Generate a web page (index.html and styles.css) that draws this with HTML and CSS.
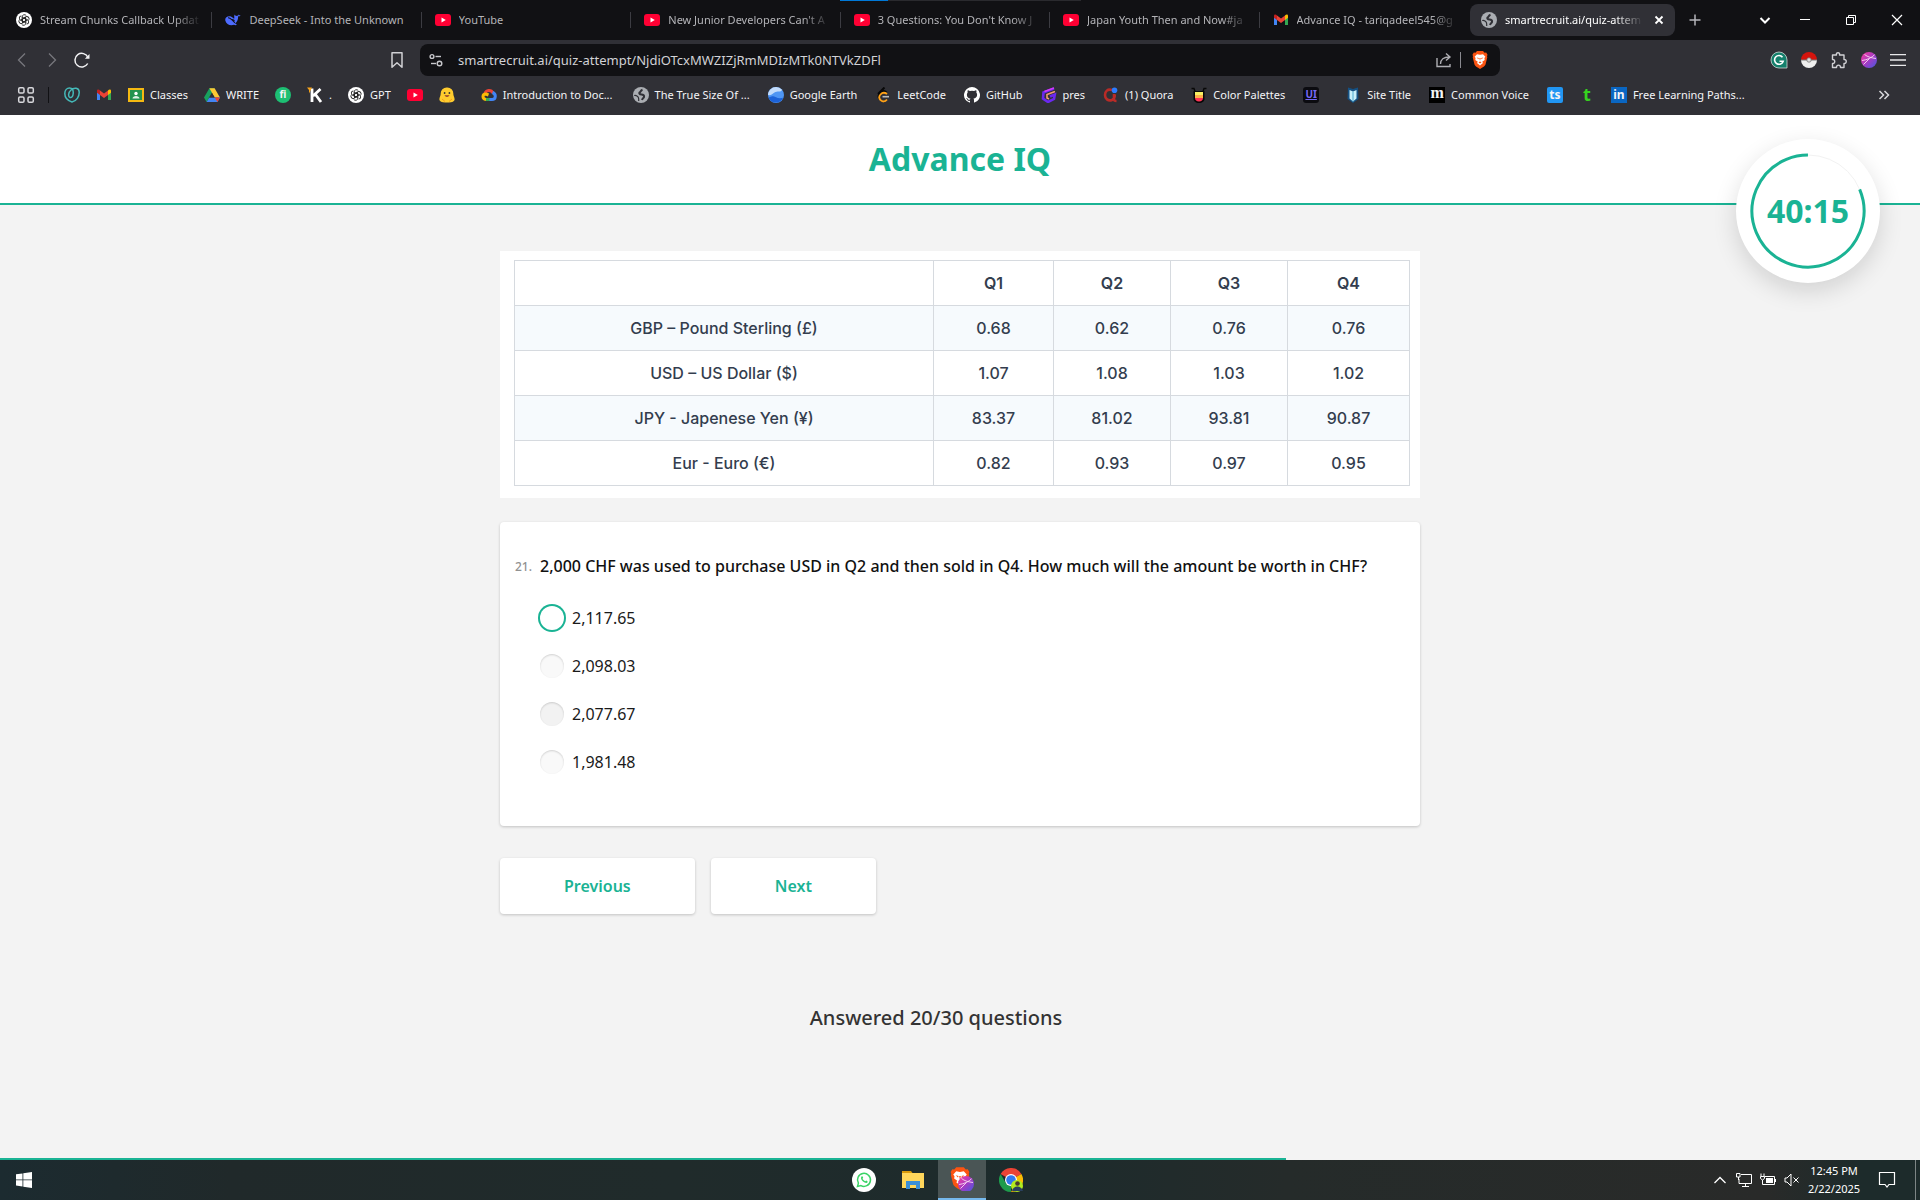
FILE: index.html
```html
<!DOCTYPE html>
<html lang="en">
<head>
<meta charset="utf-8">
<title>Advance IQ</title>
<link rel="stylesheet" href="styles.css">
</head>
<body>
<svg class="defs" aria-hidden="true">
  <symbol id="gpt" viewBox="0 0 16 16"><circle cx="8" cy="8" r="8" fill="#fff"/><g fill="none" stroke="#222" stroke-width=".9"><path id="petal" d="M6.1 8.9V5a2.3 2.3 0 0 1 4.2-1.3M6.1 5.2L9.7 7.200"/><use href="#petal" transform="rotate(60 8 8)"/><use href="#petal" transform="rotate(120 8 8)"/><use href="#petal" transform="rotate(180 8 8)"/><use href="#petal" transform="rotate(240 8 8)"/><use href="#petal" transform="rotate(300 8 8)"/></g></symbol>
  <symbol id="yt" viewBox="0 0 16 16"><rect y="2" width="16" height="12" rx="3" fill="#ff0033"/><path d="M6.500 5.500v5L10.800 8z" fill="#fff"/></symbol>
  <symbol id="gmail" viewBox="0 0 16 16"><path d="M1 4v9h3V6z" fill="#4285f4"/><path d="M12 6v7h3V4z" fill="#34a853"/><path d="M12 3.500V8l3-2.200V4c0-1.600-1.700-2-3-.5z" fill="#fbbc04"/><path d="M4 3.500V8L1 5.800V4c0-1.600 1.700-2 3-.5z" fill="#c5221f"/><path d="M4 8V3.500l4 3 4-3V8l-4 3z" fill="#ea4335"/></symbol>
  <symbol id="globe" viewBox="0 0 16 16"><circle cx="8" cy="8" r="8" fill="#aaadb2"/><path d="M9.500 2.800C7.500 3.500 8 4.500 7 5.200 5.500 6 6.500 7.500 8.500 7.500s3 1 2.500 2.500c-.5 1.200-1.500 1.200-2 3" fill="none" stroke="#303036" stroke-width="2"/><path d="M1.200 8.500c2-.5 4 .8 4.300 2.300.2 1.200.3 1.500.2 3.200" fill="none" stroke="#303036" stroke-width="1.200"/></symbol>
  <symbol id="lion" viewBox="0 0 16 18"><path d="M5 0h6l1.600 1.700 1.600-.2 1.300 2.200-.5 1.500.3 1.100-1.800 7.200c-.3 1.300-2.800 2.900-5.500 4.500-2.700-1.600-5.200-3.200-5.500-4.500L.7 6.300 1 5.200.5 3.700l1.300-2.200 1.600.2z" fill="#fb5412"/><path d="M5 3.200l3 .5 3-.5 2.400 2.500-1 1.400.3 1.800-2.500 1.800L11 12l-3 2.600L5 12l.8-1.300-2.500-1.800.3-1.800-1-1.400z" fill="#fff"/><path d="M4.600 6.400l2.200.5-.4 1.300zM11.400 6.400l-2.200.5.4 1.300zM6.500 11.300L8 10.500l1.500.8L8 12.400zM7.300 7h1.400L8 9.800z" fill="#fb5412"/></symbol>
  <linearGradient id="orb" x1="0" y1="0" x2="1" y2="1"><stop offset="0" stop-color="#ff3d9a"/><stop offset=".5" stop-color="#a63bc4"/><stop offset="1" stop-color="#4459e0"/></linearGradient>
  <symbol id="profile" viewBox="0 0 16 16"><circle cx="8" cy="8" r="8" fill="url(#orb)"/><path d="M1 8.500C6 8 11 5.500 13.500 2.800M3.500 2.500c3 2.500 7.500 3.500 11.500 4M8.500 6.500L2.500 12.500" fill="none" stroke="#fbd9f2" stroke-width=".9"/></symbol>
  <symbol id="winclose" viewBox="0 0 16 16"><path d="M3 3l10 10M13 3L3 13" stroke="#fff" stroke-width="1.200"/></symbol>
</svg>

<div class="browser">
  <div class="tabstrip">
    <nav class="tabs" aria-label="Open tabs">
      <a class="tab" href="#"><svg class="i16"><use href="#gpt"/></svg><span>Stream Chunks Callback Updat</span></a>
      <a class="tab" href="#"><svg class="i16" viewBox="0 0 16 16"><path d="M15.700 3.500c-1 1-2 .9-2.600.8.2 3-1 5.600-3 7.200l1.900 1.300c-1 .7-2.200.4-3 0-3.700 1.400-7.900-.5-8.700-4.400C-.2 5.700 2 3.900 5 4.200c1.300.2 2.300 1 3.300 2 .8.700 1.300.2 1-.8C9 4 9.400 3 9.700 2.500c.5 1.600 1.700 1.500 2.800 1.200.8-.2 1.200-.8 1.200-1.200.4.600 1.200 1 2 1z" fill="#4d6bfe"/><path d="M3 5.700c3 0 4.600 2.800 6.800 5.200M6.500 8.200c.9-.9 2.300-.6 3 .5" fill="none" stroke="#111114" stroke-width="1.100"/></svg><span class="full">DeepSeek - Into the Unknown</span></a>
      <a class="tab" href="#"><svg class="i16"><use href="#yt"/></svg><span class="full">YouTube</span></a>
      <a class="tab" href="#"><svg class="i16"><use href="#yt"/></svg><span>New Junior Developers Can't A</span></a>
      <a class="tab" href="#"><svg class="i16"><use href="#yt"/></svg><span>3 Questions: You Don't Know J</span></a>
      <a class="tab" href="#"><svg class="i16"><use href="#yt"/></svg><span>Japan Youth Then and Now#ja</span></a>
      <a class="tab last" href="#"><svg class="i16"><use href="#gmail"/></svg><span>Advance IQ - tariqadeel545@g</span></a>
      <div class="tab active"><svg class="i16"><use href="#globe"/></svg><span>smartrecruit.ai/quiz-attem</span><button class="icon-btn close" aria-label="Close tab"><svg class="i16" viewBox="0 0 16 16"><path d="M4.500 4.500l7 7M11.500 4.500l-7 7" stroke="#fff" stroke-width="1.800"/></svg></button></div>
    </nav>
    <button class="icon-btn plus" aria-label="New tab"><svg class="i16" viewBox="0 0 16 16"><path d="M8 2.500v11M2.500 8h11" stroke="#b5b5ba" stroke-width="1.500"/></svg></button>
    <div class="window-buttons">
      <button class="icon-btn search-tabs" aria-label="Search tabs"><svg class="i16" viewBox="0 0 16 16"><path d="M3.500 6L8 10.500 12.500 6" fill="none" stroke="#fff" stroke-width="2"/></svg></button>
      <button class="icon-btn" aria-label="Minimize"><svg class="i16" viewBox="0 0 16 16"><path d="M3 7.500h10" stroke="#fff"/></svg></button>
      <button class="icon-btn" aria-label="Restore"><svg class="i16" viewBox="0 0 16 16"><path d="M3.500 5.500h7v7h-7zM5.500 5.500v-2h7v7h-2" fill="none" stroke="#fff"/></svg></button>
      <button class="icon-btn" aria-label="Close"><svg class="i16"><use href="#winclose"/></svg></button>
    </div>
    <i class="load-line"></i>
  </div>

  <div class="toolbar">
    <div class="nav-buttons">
      <button class="icon-btn" aria-label="Back"><svg class="i18" viewBox="0 0 18 18"><path d="M12 2.500L5.500 9l6.500 6.500" fill="none" stroke="#77777d" stroke-width="1.300"/></svg></button>
      <button class="icon-btn" aria-label="Forward"><svg class="i18" viewBox="0 0 18 18"><path d="M6 2.500L12.500 9 6 15.500" fill="none" stroke="#77777d" stroke-width="1.300"/></svg></button>
      <button class="icon-btn" aria-label="Reload"><svg class="i18" viewBox="0 0 18 18"><path d="M15 6.500A6.800 6.800 0 1 0 14.700 12.500" fill="none" stroke="#f2f2f4" stroke-width="1.500"/><path d="M16.500 3v4.800h-4.600z" fill="#f2f2f4"/></svg></button>
    </div>
    <button class="icon-btn save" aria-label="Bookmark"><svg class="i18" viewBox="0 0 18 18"><path d="M4 1.800h10v14.400l-5-4.400-5 4.400z" fill="none" stroke="#d0d0d4" stroke-width="1.500" stroke-linejoin="round"/></svg></button>
    <div class="address">
      <svg class="i16" viewBox="0 0 16 16"><g fill="none" stroke="#c8c8cc" stroke-width="1.400"><circle cx="4" cy="4.500" r="1.900"/><path d="M7.500 4.500H13"/><circle cx="11.500" cy="11.500" r="2.300"/><path d="M3 11.500h5"/></g></svg>
      <input type="text" aria-label="Address" value="smartrecruit.ai/quiz-attempt/NjdiOTcxMWZIZjRmMDIzMTk0NTVkZDFl">
      <button class="icon-btn" aria-label="Share"><svg class="i16" viewBox="0 0 16 16"><path d="M1 6v8.500h13V12M4.500 12C4.500 7.500 8 5 13 5M10 1.500L14 5l-4 3.500" fill="none" stroke="#aeaeb3" stroke-width="1.400"/></svg></button>
      <i class="divider"></i>
      <button class="icon-btn" aria-label="Shields"><svg class="lion"><use href="#lion"/></svg></button>
    </div>
    <div class="extensions">
      <button class="icon-btn" aria-label="Grammar"><svg class="i18" viewBox="0 0 18 18"><path d="M9 1a8 8 0 0 1 8 8v8H9A8 8 0 0 1 9 1z" fill="#15806c" stroke="#cfd8d6" stroke-width=".8"/><path d="M12.500 6.200a4.400 4.400 0 1 0 .7 4H9.500" fill="none" stroke="#fff" stroke-width="1.600"/></svg></button>
      <button class="icon-btn" aria-label="Poke Ball"><svg class="i16" viewBox="0 0 16 16"><path d="M0 8a8 8 0 0 1 16 0z" fill="#d4140d"/><path d="M0 8a8 8 0 0 0 16 0z" fill="#eee"/><path d="M0 7.500h16v1H0z" fill="#777"/><circle cx="8" cy="8" r="2.200" fill="#ddd" stroke="#777" stroke-width=".8"/></svg></button>
      <button class="icon-btn" aria-label="Extensions"><svg class="i18" viewBox="0 0 18 18"><path d="M2.500 4H6.500C5.500 1 10.500 1 9.500 4H14v4.500c3-.5 3 4.300 0 4V16.500H10.500c.3-3.200-4.300-3.200-4 0h-4V12.500c3 .5 3-4.500 0-4z" fill="none" stroke="#d0d0d4" stroke-width="1.400" stroke-linejoin="round"/></svg></button>
      <button class="icon-btn" aria-label="Profile"><svg class="i16"><use href="#profile"/></svg></button>
      <button class="icon-btn" aria-label="Menu"><svg class="i16" viewBox="0 0 16 16"><path d="M0 2.700h16M0 8h16M0 13.300h16" stroke="#e8e8ea" stroke-width="1.300"/></svg></button>
    </div>
  </div>

  <nav class="bookmarks" aria-label="Bookmarks">
    <button class="icon-btn" aria-label="All bookmarks"><svg class="i18" viewBox="0 0 18 18"><g fill="none" stroke="#d8d8dc" stroke-width="1.500"><rect x="1.700" y="1.700" width="5.300" height="5.300" rx="1.300"/><rect x="11" y="1.700" width="5.300" height="5.300" rx="1.300"/><rect x="1.700" y="11" width="5.300" height="5.300" rx="1.300"/><rect x="11" y="11" width="5.300" height="5.300" rx="1.300"/></g></svg></button>
    <i class="divider dark"></i>
    <a href="#" aria-label="Mentor"><svg class="i16" viewBox="0 0 16 16"><path d="M8 15C3 13.500.8 10 .8 6.500.8 3 3 1 5.500 1c3 0 4 2.500 3.700 5.500C9 9.500 7.500 11 6 10.500 4 10 4 5.500 7 3c3-2.600 8-2.500 8.200 2C15.400 9.500 12.500 14 8 15z" fill="none" stroke="#45b9b8" stroke-width="1.500"/></svg></a>
    <a href="#" aria-label="Gmail"><svg class="i16"><use href="#gmail"/></svg></a>
    <a href="#"><svg class="i16" viewBox="0 0 16 16"><path d="M0 1h16v14H0z" fill="#f5b912"/><path d="M2 3h12v10H2z" fill="#23934e"/><circle cx="8" cy="6.500" r="1.700" fill="#fff"/><path d="M4.500 11.500c0-3.500 7-3.500 7 0z" fill="#dff1e5"/></svg>Classes</a>
    <a href="#"><svg class="i16" viewBox="0 0 16 16"><path d="M5.400 1.300h5.200L5.300 10.300 2.600 15 0 10.500z" fill="#18a05e"/><path d="M5.400 1.300h5.200l5.400 9.200h-5.300z" fill="#fcc934"/><path d="M5.300 10.500H16L13.400 15H2.600z" fill="#4285f4"/><path d="M10.700 10.500H16L13.400 15z" fill="#ea4335"/><path d="M8 6l2.600 4.500H5.300z" fill="#303036"/></svg>WRITE</a>
    <a href="#" class="badge fiverr"><b>fi</b></a>
    <a href="#" class="kwork"><svg class="i16" viewBox="0 0 16 16"><path d="M5 1.500V15M13.500 2L6 9M8.500 7.500L14 15" stroke="#fff" stroke-width="2.800" fill="none"/><path d="M0 .5h5L2 6.500V3z" fill="#f7a31b"/></svg>.</a>
    <a href="#"><svg class="i16"><use href="#gpt"/></svg>GPT</a>
    <a href="#" aria-label="YouTube"><svg class="i16"><use href="#yt"/></svg></a>
    <a href="#" class="wide" aria-label="Hugging Face"><svg class="i16" viewBox="0 0 16 16"><path d="M8 .5a6 6 0 0 1 6.300 6.500c.2 2.500 2 4.500 1 6.500-1.300 2-4.800 2-7.300 2s-6 0-7.300-2c-1-2 .8-4 1-6.500A6 6 0 0 1 8 .5z" fill="#ffcc2e"/><circle cx="5.600" cy="6" r=".9" fill="#333"/><circle cx="10.400" cy="6" r=".9" fill="#333"/><path d="M5.500 8.300c1.200 2.200 3.800 2.200 5 0z" fill="#923d2b"/><path d="M3 12l3 2.500M13 12l-3 2.500" stroke="#f39b1d"/></svg></a>
    <a href="#" class="clipped"><svg class="i16" viewBox="0 0 16 16"><g fill="none" stroke-width="3"><path d="M4 6.500C5 3 10 2 12 6" stroke="#ea4335"/><path d="M11.500 5.500c4 1.500 3.500 7-.5 7H8" stroke="#4285f4"/><path d="M8.500 12.500H4.500" stroke="#34a853"/><path d="M5 12.500c-4-.5-4-5.500 0-5.500l2.500 1" stroke="#fbbc04"/></g></svg>Introduction to Doc...</a>
    <a href="#"><svg class="i16"><use href="#globe"/></svg>The True Size Of ...</a>
    <a href="#"><svg class="i16" viewBox="0 0 16 16"><circle cx="8" cy="8" r="8" fill="#4f96f4"/><path d="M2.300 2.500A8 8 0 0 1 14 2.800C13 6 9 3.500 6.500 5.500S2.500 8.500 0 8c0-2 .8-4 2.300-5.500z" fill="#c3dcfb"/><path d="M.5 10.500c3-1 4.500-2 7-.5s5 1.500 7.700.8A8 8 0 0 1 .5 10.500z" fill="#1c62d8"/></svg>Google Earth</a>
    <a href="#"><svg class="i16" viewBox="0 0 16 16"><path d="M9.500.5L3 7" stroke="#080808" stroke-width="2" fill="none"/><path d="M11.500 5.500c-2-2-4-1.500-5.500 0-2.500 2.500-3.500 4-1.500 6" stroke="#080808" stroke-width="2" fill="none"/><path d="M12 12.500c-2 2.700-5 2.400-6.500.5-2-2-1.800-3.500 0-5.500s4-2.400 6.500-.5" stroke="#ffa116" stroke-width="1.800" fill="none"/><path d="M7.500 9.700H14" stroke="#bbb" stroke-width="1.600"/></svg>LeetCode</a>
    <a href="#"><svg class="i16" viewBox="0 0 16 16"><path d="M8 0a8 8 0 0 0-2.500 15.600c.4.100.5-.2.500-.4v-1.400c-2.200.5-2.700-1-2.700-1-.4-.9-.9-1.200-.9-1.200-.7-.5.100-.5.100-.5.800.1 1.200.8 1.200.8.700 1.200 1.900.9 2.300.7.100-.5.300-.9.500-1.100-1.800-.2-3.600-.9-3.600-4 0-.9.300-1.600.8-2.100-.1-.2-.4-1 .1-2.100 0 0 .7-.2 2.200.8a7.600 7.600 0 0 1 4 0c1.500-1 2.200-.8 2.200-.8.500 1.100.2 1.900.1 2.100.5.600.8 1.300.8 2.100 0 3.100-1.900 3.800-3.700 4 .3.300.6.800.6 1.500v2.200c0 .2.100.5.500.4A8 8 0 0 0 8 0z" fill="#fff"/></svg>GitHub</a>
    <a href="#"><svg class="i16" viewBox="0 0 16 16"><path d="M13 1.500L2.500 5.500 2 11.500l5 3.500 6-3 .8-4.500L9 9.500" fill="none" stroke="#6a28f0" stroke-width="2.600"/><path d="M14 4.500L6 7.500v3.500l2 1" fill="none" stroke="#f49a75" stroke-width="1.600"/><path d="M3.500 4.500L13 1" stroke="#d63af5" stroke-width="1.400"/></svg>pres</a>
    <a href="#"><svg class="i16" viewBox="0 0 16 16"><path d="M9 3C4.500 1.500 2 4.500 2 8s3 6.500 7 5c2.200-1 2.800-3 2.800-5.500M11 7v5.500c0 1 1 1.500 2.500 1.500" fill="none" stroke="#b92b27" stroke-width="2.600"/><circle cx="11.500" cy="3.200" r="2.800" fill="#2b7cff"/></svg>(1) Quora</a>
    <a href="#"><svg class="i16" viewBox="0 0 16 16"><path d="M.5 1.500h2.500l1 3M15.500 1.500H13l-1 3" fill="none" stroke="#080808" stroke-width="1.400"/><path d="M2.500 4h11v8c0 2-2 4-5.500 4s-5.500-2-5.500-4z" fill="#080808"/><path d="M4 5h8v3H4z" fill="#f8f062"/><path d="M4 8h8v3H4z" fill="#ffb04a"/><path d="M4 11h8c0 2-1.500 3.500-4 3.500S4 13 4 11z" fill="#f35"/></svg>Color Palettes</a>
    <a href="#" class="badge ui"><b>UI</b></a>
    <a href="#"><svg class="i16" viewBox="0 0 16 16"><path d="M8 2L3 .5 2.500 12 8 16l5.500-4L13 .5z" fill="#155082"/><path d="M4.500 3L8 4.500 11.500 3v8.500L8 14.500l-3.500-3z" fill="#c9eff9"/><path d="M8 4.500v10" stroke="#4eaccf"/></svg>Site Title</a>
    <a href="#"><b class="mark moz">m</b>Common Voice</a>
    <a href="#" class="badge ts"><b>ts</b></a>
    <a href="#" class="badge tee"><b>t</b></a>
    <a href="#"><b class="mark linked">in</b>Free Learning Paths...</a>
    <button class="icon-btn more" aria-label="More bookmarks"><svg class="i16" viewBox="0 0 16 16"><path d="M3.500 4L7.500 8l-4 4M8.500 4l4 4-4 4" fill="none" stroke="#d8d8dc" stroke-width="1.500"/></svg></button>
  </nav>
</div>

<div class="page">
  <header class="page-header">
    <h1>Advance IQ</h1>
    <div class="timer">
      <svg viewBox="0 0 144 144"><circle cx="72" cy="72" r="56" fill="none" stroke="#f2f2f2" stroke-width="1"/><circle cx="72" cy="72" r="56" fill="none" stroke="#1ab394" stroke-width="3" pathLength="1000" stroke-dasharray="813 187" transform="rotate(-22.700 72 72)"/></svg>
      <span>40:15</span>
    </div>
  </header>

  <main class="quiz">
    <section class="rates-card">
      <table class="rates">
        <colgroup><col class="c-name"><col class="c1"><col class="c2"><col class="c3"><col class="c4"></colgroup>
        <thead><tr><td></td><th>Q1</th><th>Q2</th><th>Q3</th><th>Q4</th></tr></thead>
        <tbody>
          <tr><td>GBP – Pound Sterling (£)</td><td>0.68</td><td>0.62</td><td>0.76</td><td>0.76</td></tr>
          <tr><td>USD – US Dollar ($)</td><td>1.07</td><td>1.08</td><td>1.03</td><td>1.02</td></tr>
          <tr><td>JPY - Japenese Yen (¥)</td><td>83.37</td><td>81.02</td><td>93.81</td><td>90.87</td></tr>
          <tr><td>Eur - Euro (€)</td><td>0.82</td><td>0.93</td><td>0.97</td><td>0.95</td></tr>
        </tbody>
      </table>
    </section>

    <form class="question">
      <span class="number">21.</span>
      <h2>2,000 CHF was used to purchase USD in Q2 and then sold in Q4. How much will the amount be worth in CHF?</h2>
      <div class="options">
        <label><input type="radio" name="answer" checked>2,117.65</label>
        <label><input type="radio" name="answer">2,098.03</label>
        <label class="hovered"><input type="radio" name="answer">2,077.67</label>
        <label><input type="radio" name="answer">1,981.48</label>
      </div>
    </form>

    <div class="actions">
      <button>Previous</button>
      <button>Next</button>
    </div>

    <p class="answered">Answered 20/30 questions</p>
  </main>

  <div class="progress"><div class="progress-fill" style="width: 67%"></div></div>
</div>

<footer class="taskbar">
  <button class="start" aria-label="Start"><svg class="i16" viewBox="0 0 16 16"><path d="M0 2.300L6.500 1.400V7.500H0zM7.300 1.300L16 0v7.500H7.300zM0 8.300h6.500v6.200L0 13.600zM7.300 8.300H16V16l-8.700-1.200z" fill="#fff"/></svg></button>
  <div class="apps">
    <button aria-label="WhatsApp"><svg class="i24" viewBox="0 0 24 24"><circle cx="12" cy="12" r="12" fill="#fff"/><path d="M5.500 18.500l.9-3.300a6.500 6.500 0 1 1 2.500 2.400z" fill="none" stroke="#3bd366" stroke-width="1.500"/><path d="M9.500 8.500c-1.200 1.500-.2 3.500 1.500 5s3.800 2 4.600.8c.5-1-.7-1.500-1.500-1.800-.7.900-1 .8-2 .1s-1.500-1.400-1.600-2c.8-.7.800-.9.300-1.900-.3-.6-.8-.8-1.300-.2z" fill="#3bd366"/></svg></button>
    <button aria-label="File Explorer"><svg class="i24" viewBox="0 0 24 24"><path d="M1 3h9l1.500 2H1z" fill="#d99a0b"/><path d="M1 5h22v15H1z" fill="#ffd65b"/><path d="M5 13h14v8h-4v-4H9v4H5z" fill="#3a8fd8"/></svg></button>
    <button class="current" aria-label="Brave"><svg class="i24" viewBox="0 0 24 24"><use href="#lion" width="20" height="23"/><use href="#profile" x="8" y="9" width="16" height="16"/></svg></button>
    <button aria-label="Chrome"><svg class="i24" viewBox="0 0 24 24"><path d="M12 12L1.600 6a12 12 0 0 1 20.800 0z" fill="#ea4335"/><path d="M12 12h0L22.400 6A12 12 0 0 1 12 24l5.200-9z" fill="#fbbc04"/><path d="M1.600 6l5.200 9L12 17v7A12 12 0 0 1 1.600 6z" fill="#1e9b4c"/><circle cx="12" cy="12" r="6" fill="#fff"/><circle cx="12" cy="12" r="4.800" fill="#3179ee"/><circle cx="18" cy="18" r="6" fill="#b2ec1e"/><circle cx="18.500" cy="15.500" r="2.300" fill="#493a2d"/><path d="M13 23c1-6 9.500-6 11 0z" fill="#29405f"/></svg></button>
  </div>
  <div class="tray">
    <svg class="i16" viewBox="0 0 16 16"><path d="M2.500 11L8 5.500l5.500 5.500" fill="none" stroke="#fff" stroke-width="1.300"/></svg>
    <svg class="i16" viewBox="0 0 16 16"><path d="M5 2.500h10.500v9H3V7M.5 1.500H4V5H.5zM2.500 5v3M9.500 11.500v3M6 14.500h7" fill="none" stroke="#fff"/></svg>
    <svg class="i16" viewBox="0 0 16 16"><path d="M4.500 4.500h10v8H4M15.500 7v3M1 1.500V4M4 1.500V4M.5 4.500h4v2l-2 1.500-2-1.500zM2.500 8v4.500H5" fill="none" stroke="#fff"/><path d="M6 6h7v5H6z" fill="#fff"/></svg>
    <svg class="i16" viewBox="0 0 16 16"><path d="M1 6h2l4-4v12l-4-4H1zM9.500 5.500l5 5M14.500 5.500l-5 5" fill="none" stroke="#fff"/></svg>
    <div class="clock"><span>12:45 PM</span><span>2/22/2025</span></div>
    <svg class="i18" viewBox="0 0 18 18"><path d="M1.500 1.500h15v12H11l-2 2.500-2-2.500H1.500z" fill="none" stroke="#fff" stroke-width="1.200"/></svg>
    <i class="peek"></i>
  </div>
</footer>
</body>
</html>
```

FILE: styles.css
```css
* { box-sizing: border-box; }

body {
  margin: 0;
  min-height: 100vh;
  display: flex;
  flex-direction: column;
  background: #f3f3f3;
  font-family: "Noto Sans", "Open Sans", sans-serif;
  font-size: 16px;
}

button, input { font: inherit; }

svg { flex: none; display: block; }

.defs { position: absolute; width: 0; height: 0; }
.i16 { width: 16px; height: 16px; }
.i18 { width: 18px; height: 18px; }
.i24 { width: 24px; height: 24px; }

.icon-btn {
  display: flex;
  padding: 0;
  border: 0;
  background: none;
}

/* Browser chrome */

.browser {
  background: #303036;
  color: #f4f4f6;
  font-size: 11px;
  line-height: 16px;
}

.tabstrip {
  position: relative;
  display: flex;
  align-items: center;
  height: 40px;
  padding-left: 3px;
  background: #111114;
}

.load-line {
  position: absolute;
  top: 0;
  left: 840px;
  width: 241px;
  height: 1px;
  background: linear-gradient(90deg, #0078d7 20%, #2a2a2e 20%);
}

.tabs { display: flex; flex: 0 1 1673px; min-width: 0; }

.tab {
  position: relative;
  flex: 1 1 0;
  min-width: 0;
  display: flex;
  align-items: center;
  gap: 8px;
  height: 32px;
  padding: 0 10px 0 13px;
  color: #b4b4b8;
  text-decoration: none;
}

.tab::after {
  content: "";
  position: absolute;
  right: 0;
  top: 8px;
  width: 1px;
  height: 16px;
  background: #3c3c42;
}

.tab.last::after, .tab.active::after { display: none; }

.tab span {
  flex: 1;
  overflow: hidden;
  white-space: nowrap;
  mask-image: linear-gradient(90deg, #000 calc(100% - 28px), transparent);
}

.tab .full { mask-image: none; }

.tab.active {
  flex: 0 1 205px;
  margin: 0 1px;
  padding: 0 8px 0 11px;
  border-radius: 8px;
  background: #303036;
  color: #fff;
}

.plus { margin-left: 11px; }

.window-buttons {
  display: flex;
  gap: 30px;
  margin-left: auto;
  padding-right: 15px;
}

.search-tabs { margin-right: -6px; }

.toolbar {
  display: flex;
  align-items: center;
  height: 40px;
  padding: 0 14px 0 13px;
}

.nav-buttons { display: flex; gap: 12px; }
.save { margin-left: 297px; margin-right: 14px; }

.address {
  flex: 0 1 1080px;
  display: flex;
  align-items: center;
  gap: 8px;
  height: 32px;
  padding: 0 12px 0 8px;
  border-radius: 8px;
  background: #111114;
}

.address input {
  flex: 1;
  min-width: 0;
  height: 32px;
  padding: 0 0 0 6px;
  border: 0;
  background: none;
  color: #d2d2d6;
  font-size: 13px;
}

.divider { width: 1px; height: 16px; background: #8a8a90; }
.address .divider { margin-right: 3px; }
.divider.dark { background: #111114; }
.lion { width: 16px; height: 18px; }
.extensions { display: flex; align-items: center; gap: 13px; margin-left: auto; }

.bookmarks {
  display: flex;
  align-items: center;
  gap: 16px;
  height: 35px;
  padding: 0 28px 6px 17px;
}

.bookmarks a {
  display: flex;
  align-items: center;
  gap: 6px;
  color: #f4f4f6;
  text-decoration: none;
  white-space: nowrap;
}

.bookmarks .divider { margin: 0 -1px 0 -3px; }
.bookmarks .wide { padding-right: 10px; }
.bookmarks .clipped { padding-right: 4px; }
.bookmarks .clipped ~ a:not(.badge) { padding-right: 2px; }
.bookmarks .clipped ~ .ui { padding-right: 10px; }
.bookmarks .more { margin-left: auto; }

.badge b, .mark {
  display: block;
  width: 16px;
  height: 16px;
  font-size: 12px;
  line-height: 15px;
  text-align: center;
}

.fiverr b { border-radius: 50%; background: #1dbf73; font-size: 10px; }
.ui b { border-radius: 3px; background: #0b0b10; color: #7668f5; font-size: 10px; line-height: 14px; text-decoration: underline; }
.moz { background: #000; font-family: "Liberation Serif", serif; font-size: 16px; line-height: 12px; }
.ts b { border-radius: 2px; background: #2196f3; }
.tee b { color: #36d31f; font-size: 18px; line-height: 14px; }
.linked { background: #0a66c2; }

/* Quiz page */

.page { flex: 1; display: flex; flex-direction: column; }

.page-header {
  position: relative;
  height: 90px;
  border-bottom: 2px solid #1ab394;
  background: #fff;
  color: #1ab394;
  font-weight: 700;
}

.page-header h1 {
  margin: 0;
  font-size: 32px;
  line-height: 88px;
  text-align: center;
}

.timer {
  position: absolute;
  top: 24px;
  right: 40px;
  display: grid;
  place-items: center;
  width: 144px;
  height: 144px;
  border-radius: 50%;
  background: #fff;
  box-shadow: 0 8px 24px rgba(0, 0, 0, .14);
  font-size: 32px;
  line-height: 40px;
}

.timer svg, .timer span { grid-area: 1 / 1; }
.timer svg { width: 144px; height: 144px; }

.quiz {
  width: 100%;
  max-width: 920px;
  margin: 0 auto;
  padding-top: 46px;
}

.rates-card { padding: 9px 10px 12px 14px; background: #fff; }

.rates {
  width: 100%;
  table-layout: fixed;
  border-collapse: collapse;
  color: #333d4e;
  font-family: Inter, sans-serif;
  font-size: 16px;
  line-height: 20px;
  text-align: center;
}

.rates td, .rates th {
  height: 45px;
  padding: 0;
  border: 1px solid #d6dadf;
  font-weight: 500;
}

.rates th { font-weight: 600; }
.rates tbody tr:nth-child(odd) { background: #f6fafd; }
.c1 { width: 120px; }
.c2, .c3 { width: 117px; }
.c4 { width: 122px; }

.question {
  display: grid;
  grid-template-columns: 25px 1fr;
  align-items: center;
  row-gap: 16px;
  margin-top: 24px;
  padding: 32px 15px 40px;
  border-radius: 4px;
  background: #fff;
  box-shadow: 0 1px 3px rgba(0, 0, 0, .2);
  color: #1a1a1a;
}

.question h2 { margin: 0; font-size: 16px; line-height: 24px; font-weight: 500; color: #111; }
.number { color: #919191; font-size: 12px; font-weight: 500; }
.options { grid-column: 2; }

.options label {
  display: flex;
  align-items: center;
  gap: 8px;
  height: 48px;
}

.options input {
  appearance: none;
  width: 24px;
  height: 24px;
  margin: 0;
  border-radius: 50%;
  background: #f9f9f9;
  box-shadow: inset 0 1px 2px rgba(0, 0, 0, .16);
}

.options .hovered input { background: #f2f2f2; }
.options input:checked { background: #fff; box-shadow: 0 0 0 2px #1ab394; }

.actions { display: flex; gap: 16px; margin-top: 32px; }

.actions button {
  height: 56px;
  padding: 0 64px;
  border: 0;
  border-radius: 4px;
  background: #fff;
  box-shadow: 0 1px 3px rgba(0, 0, 0, .2);
  color: #1ab394;
  font-weight: 600;
}

.answered {
  margin: 88px 48px 0 0;
  color: #333;
  font-size: 20px;
  font-weight: 500;
  line-height: 32px;
  text-align: center;
}

.progress { height: 2px; margin-top: auto; }
.progress-fill { height: 2px; background: #1ab394; }

/* Taskbar */

.taskbar {
  display: grid;
  grid-template-columns: 1fr auto 1fr;
  align-items: center;
  height: 40px;
  background: linear-gradient(90deg, #1c2b30, #20292a 12%, #202b2b 35%, #1d2b2c 55%, #252b2a 67%, #292a29 92%, #1d2b2b 97%);
  color: #fff;
}

.taskbar button { display: grid; place-items: center; height: 40px; border: 0; padding: 0; background: none; }
.taskbar .start { width: 48px; }
.taskbar .apps { display: flex; gap: 1px; padding-right: 46px; }
.taskbar .apps button { width: 48px; }
.taskbar .apps .current { background: #4a5555; border-bottom: 2px solid #76b9ed; }
.tray { display: flex; align-items: center; justify-content: flex-end; gap: 8px; }
.clock { display: flex; flex-direction: column; width: 72px; margin-left: -10px; font-size: 11px; line-height: 18px; text-align: center; white-space: nowrap; }
.tray .i18 { margin: 0 11px 0 0; }
.peek { width: 5px; height: 40px; border-left: 1px solid #7d8585; }
```
